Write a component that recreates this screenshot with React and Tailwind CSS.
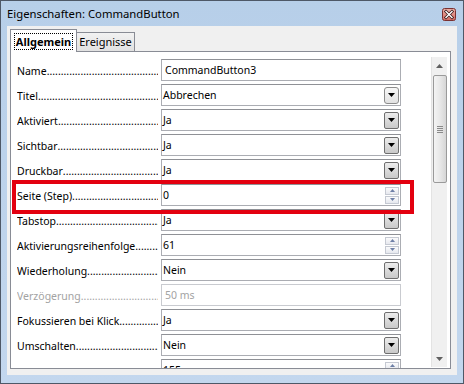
import React from 'react';

const rows = [
  { label: 'Name', value: 'CommandButton3', kind: 'text' },
  { label: 'Titel', value: 'Abbrechen', kind: 'select', soft: true },
  { label: 'Aktiviert', value: 'Ja', kind: 'select' },
  { label: 'Sichtbar', value: 'Ja', kind: 'select' },
  { label: 'Druckbar', value: 'Ja', kind: 'select' },
  { label: 'Seite (Step)', value: '0', kind: 'spin' },
  { label: 'Tabstop', value: 'Ja', kind: 'select' },
  { label: 'Aktivierungsreihenfolge', value: '61', kind: 'spin' },
  { label: 'Wiederholung', value: 'Nein', kind: 'select' },
  { label: 'Verzögerung', value: '50 ms', kind: 'text', disabled: true },
  { label: 'Fokussieren bei Klick', value: 'Ja', kind: 'select' },
  { label: 'Umschalten', value: 'Nein', kind: 'select' },
  { label: '', value: '155', kind: 'spin' },
];

const DOTS = '.'.repeat(80);

function DropButton({ soft }) {
  return (
    <div
      className={
        soft
          ? 'w-[15px] h-[17px] rounded-[3px] border border-[#8c8c8c] bg-gradient-to-b from-[#f7f7f7] to-[#e2e2e2] flex items-center justify-center'
          : 'w-[15px] h-[17px] rounded-[2px] border border-[#6e6e6e] bg-gradient-to-b from-[#ececec] to-[#c9c9c9] flex items-center justify-center'
      }
    >
      <svg width="7" height="4" viewBox="0 0 7 4">
        <path d="M0 0h7L3.5 4z" fill="#000" />
      </svg>
    </div>
  );
}

function SpinButtons() {
  return (
    <div className="flex flex-col gap-[1px]">
      {[0, 1].map((i) => (
        <div
          key={i}
          className="w-[14px] h-[8px] border border-[#c5c9d2] bg-gradient-to-b from-[#fbfbfc] to-[#e6e8ee] flex items-center justify-center"
        >
          <svg width="5" height="3" viewBox="0 0 5 3">
            <path d={i === 0 ? 'M0 3h5L2.5 0z' : 'M0 0h5L2.5 3z'} fill="#6d7fa6" />
          </svg>
        </div>
      ))}
    </div>
  );
}

function Row({ label, value, kind, soft, disabled }) {
  const txt = disabled ? 'text-[#a3a3a3]' : 'text-black';
  return (
    <div className="flex items-center h-[22px] shrink-0">
      <div className={`w-[144px] flex overflow-hidden whitespace-nowrap leading-[16px] pr-[3px] pt-[2px] ${txt}`}>
        {label && (
          <>
            <span>{label}</span>
            <span className="overflow-hidden">{DOTS}</span>
          </>
        )}
      </div>
      <div
        className={`w-[240px] h-[22px] border flex items-center justify-between ${
          disabled ? 'border-[#c9cbd0]' : 'border-[#abadb3] border-t-[#8f9196]'
        } bg-white`}
      >
        <span className={`leading-[16px] ${kind === 'text' ? 'pl-[3px]' : 'pl-[1px]'} ${txt}`}>{value}</span>
        {kind === 'select' && (
          <div className="pr-[1px]">
            <DropButton soft={soft} />
          </div>
        )}
        {kind === 'spin' && (
          <div className="pr-[1px]">
            <SpinButtons />
          </div>
        )}
      </div>
    </div>
  );
}

function Scrollbar() {
  return (
    <div className="w-[16px] mt-[5px] mb-[1px] bg-[#f0f0f0] border-l border-[#e3e3e3] flex flex-col items-center">
      <div className="h-[17px] flex items-center justify-center">
        <svg width="7" height="4" viewBox="0 0 7 4">
          <path d="M0 4h7L3.5 0z" fill="#606060" />
        </svg>
      </div>
      <div className="w-[14px] h-[108px] mt-[1px] rounded-[2px] border border-[#9a9a9a] bg-gradient-to-r from-[#f4f4f4] via-[#e8e8e8] to-[#d6d6d6] flex items-center justify-center">
        <div className="flex flex-col gap-[1px]">
          <div className="w-[6px] h-[1px] bg-[#8a8a8a]" />
          <div className="w-[6px] h-[1px] bg-[#8a8a8a]" />
          <div className="w-[6px] h-[1px] bg-[#8a8a8a]" />
          <div className="w-[6px] h-[1px] bg-[#8a8a8a]" />
        </div>
      </div>
      <div className="flex-1" />
      <div className="h-[17px] flex items-center justify-center">
        <svg width="7" height="4" viewBox="0 0 7 4">
          <path d="M0 0h7L3.5 4z" fill="#606060" />
        </svg>
      </div>
    </div>
  );
}

export default function App() {
  return (
    <div className="relative w-[464px] h-[384px] overflow-hidden border border-[#4e5867] bg-gradient-to-b from-[#b7cfe9] to-[#c3d7ee] flex flex-col text-[10.5px] leading-none font-['Noto_Sans',sans-serif]">
      {/* title bar */}
      <div className="h-[25px] shrink-0 flex items-center justify-between pl-[6px] pr-[7px]">
        <span className="text-black text-[11.3px] leading-[16px]">Eigenschaften: CommandButton</span>
        <svg width="14" height="13" viewBox="0 0 14 13" className="mt-[1px]">
          <defs>
            <linearGradient id="cg" x1="0" y1="0" x2="0" y2="1">
              <stop offset="0" stopColor="#ecb1a8" />
              <stop offset="1" stopColor="#d36a61" />
            </linearGradient>
          </defs>
          <rect x="0.5" y="0.5" width="13" height="12" rx="2" fill="url(#cg)" stroke="#7a3131" />
          <path d="M4 3.5l6 6M10 3.5l-6 6" stroke="#3a1a1a" strokeWidth="3" strokeLinecap="square" />
          <path d="M4 3.5l6 6M10 3.5l-6 6" stroke="#fff" strokeWidth="1.4" strokeLinecap="square" />
        </svg>
      </div>

      {/* client area */}
      <div className="flex-1 min-h-0 mx-[6px] mb-[8px] bg-[#f0f0f0] flex flex-col pl-[3px] pr-[6px] pt-[3px]">
        {/* tabs */}
        <div className="flex items-end h-[22px] shrink-0 relative z-10">
          <div className="w-[67px] h-[23px] -mb-[1px] border border-b-0 border-[#898c95] bg-white flex items-center justify-center">
            <span className="font-bold text-[11px] leading-[13px] text-black px-[2px] py-[2px] outline outline-1 outline-dotted outline-[#000] -outline-offset-1">
              Allgemein
            </span>
          </div>
          <div className="w-[58px] h-[19px] border border-l-0 border-b-0 border-[#898c95] bg-gradient-to-b from-[#f2f2f2] to-[#e1e1e1] flex items-center justify-center text-black text-[11px] leading-[14px]">
            Ereignisse
          </div>
        </div>
        {/* panel */}
        <div className="h-[318px] shrink-0 border border-[#898c95] bg-white flex overflow-hidden">
          <div className="flex-1 min-h-0 overflow-hidden pl-[6px] pt-[7px] flex flex-col gap-[3px]">
            {rows.map((r, i) => (
              <Row key={i} {...r} />
            ))}
          </div>
          <div className="pr-[3px] flex">
            <Scrollbar />
          </div>
        </div>
      </div>

      {/* highlight */}
      <div className="absolute left-[11px] top-[179px] w-[402px] h-[34px] border-[4px] border-[#e3000f] pointer-events-none" />
    </div>
  );
}
